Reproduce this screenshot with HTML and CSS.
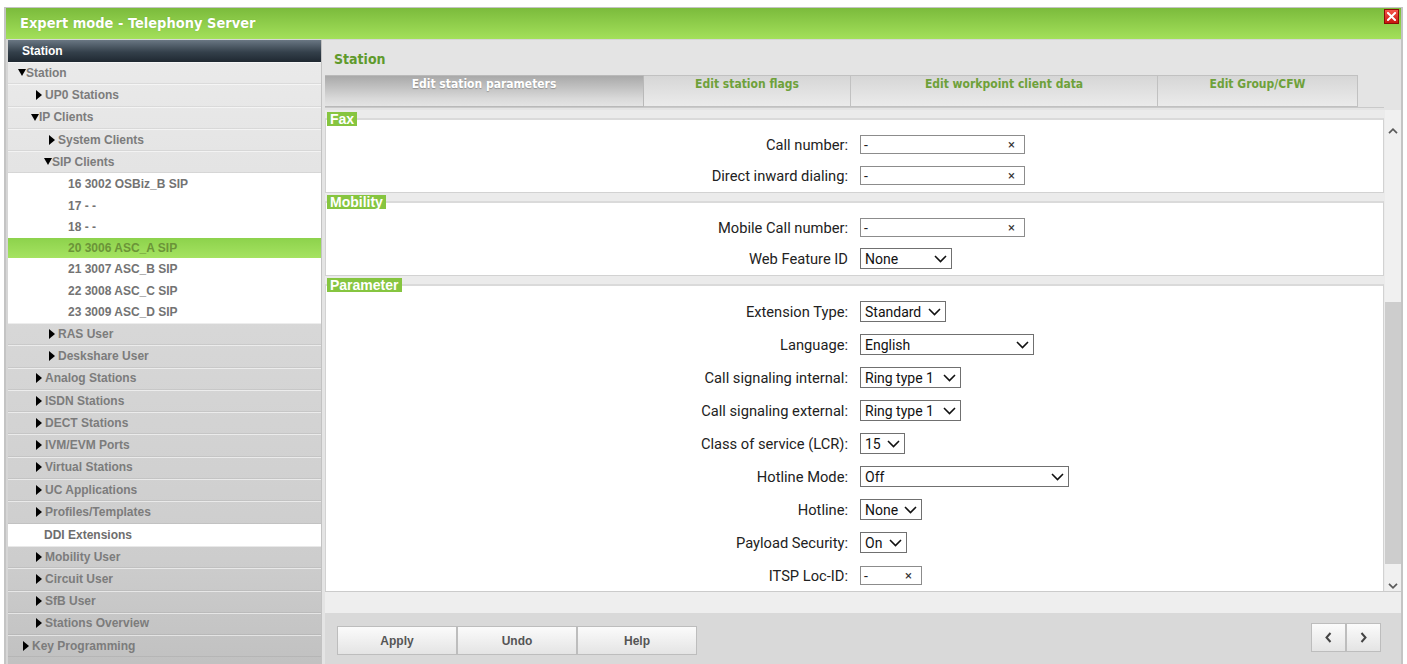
FILE: index.html
```html
<!DOCTYPE html>
<html lang="en">
<head>
<meta charset="utf-8">
<title>Expert mode - Telephony Server</title>
<link rel="stylesheet" href="styles.css">
</head>
<body>
<div class="window">
  <header class="titlebar">
    <span class="title">Expert mode - Telephony Server</span>
    <button class="close" aria-label="Close">
      <svg width="9" height="9" viewBox="0 0 9 9"><path d="M1 1L8 8M8 1L1 8" stroke="#fff" stroke-width="2" stroke-linecap="square"/></svg>
    </button>
  </header>
  <div class="body">
    <nav class="sidebar">
      <div class="side-head">Station</div>
      <ul class="tree">
        <li class="open l0"><span class="tog"></span>Station</li>
        <li class="closed l1"><span class="tog"></span>UP0 Stations</li>
        <li class="open l1"><span class="tog"></span>IP Clients</li>
        <li class="closed l2"><span class="tog"></span>System Clients</li>
        <li class="open l2"><span class="tog"></span>SIP Clients</li>
        <li class="leaf sub i3">16 3002 OSBiz_B SIP</li>
        <li class="leaf sub i3">17 - -</li>
        <li class="leaf sub i3">18 - -</li>
        <li class="leaf current i3">20 3006 ASC_A SIP</li>
        <li class="leaf sub i3">21 3007 ASC_B SIP</li>
        <li class="leaf sub i3">22 3008 ASC_C SIP</li>
        <li class="leaf sub i3">23 3009 ASC_D SIP</li>
        <li class="closed l2"><span class="tog"></span>RAS User</li>
        <li class="closed l2"><span class="tog"></span>Deskshare User</li>
        <li class="closed l1"><span class="tog"></span>Analog Stations</li>
        <li class="closed l1"><span class="tog"></span>ISDN Stations</li>
        <li class="closed l1"><span class="tog"></span>DECT Stations</li>
        <li class="closed l1"><span class="tog"></span>IVM/EVM Ports</li>
        <li class="closed l1"><span class="tog"></span>Virtual Stations</li>
        <li class="closed l1"><span class="tog"></span>UC Applications</li>
        <li class="closed l1"><span class="tog"></span>Profiles/Templates</li>
        <li class="leaf white i1">DDI Extensions</li>
        <li class="closed l1"><span class="tog"></span>Mobility User</li>
        <li class="closed l1"><span class="tog"></span>Circuit User</li>
        <li class="closed l1"><span class="tog"></span>SfB User</li>
        <li class="closed l1"><span class="tog"></span>Stations Overview</li>
        <li class="closed l0"><span class="tog"></span>Key Programming</li>
      </ul>
    </nav>

    <main class="main">
      <h1 class="page-title">Station</h1>

      <div class="tabbar">
        <div class="tab active">Edit station parameters</div>
        <div class="tab">Edit station flags</div>
        <div class="tab">Edit workpoint client data</div>
        <div class="tab">Edit Group/CFW</div>
      </div>

      <div class="scroller">
        <div class="pane">
          <fieldset class="group">
            <legend>Fax</legend>
            <div class="field">
              <label>Call number:</label>
              <div class="text w-165"><span>-</span><span class="clear">×</span></div>
            </div>
            <div class="field">
              <label>Direct inward dialing:</label>
              <div class="text w-165"><span>-</span><span class="clear">×</span></div>
            </div>
          </fieldset>

          <fieldset class="group">
            <legend>Mobility</legend>
            <div class="field">
              <label>Mobile Call number:</label>
              <div class="text w-165"><span>-</span><span class="clear">×</span></div>
            </div>
            <div class="field">
              <label>Web Feature ID</label>
              <div class="select w-92"><span>None</span><svg class="chev" width="13" height="8" viewBox="0 0 13 8"><path d="M1 1L6.5 6.5L12 1" fill="none" stroke="#111" stroke-width="1.6"/></svg></div>
            </div>
          </fieldset>

          <fieldset class="group tall">
            <legend>Parameter</legend>
            <div class="field">
              <label>Extension Type:</label>
              <div class="select w-86"><span>Standard</span><svg class="chev" width="13" height="8" viewBox="0 0 13 8"><path d="M1 1L6.5 6.5L12 1" fill="none" stroke="#111" stroke-width="1.6"/></svg></div>
            </div>
            <div class="field">
              <label>Language:</label>
              <div class="select w-174"><span>English</span><svg class="chev" width="13" height="8" viewBox="0 0 13 8"><path d="M1 1L6.5 6.5L12 1" fill="none" stroke="#111" stroke-width="1.6"/></svg></div>
            </div>
            <div class="field">
              <label>Call signaling internal:</label>
              <div class="select w-101"><span>Ring type 1</span><svg class="chev" width="13" height="8" viewBox="0 0 13 8"><path d="M1 1L6.5 6.5L12 1" fill="none" stroke="#111" stroke-width="1.6"/></svg></div>
            </div>
            <div class="field">
              <label>Call signaling external:</label>
              <div class="select w-101"><span>Ring type 1</span><svg class="chev" width="13" height="8" viewBox="0 0 13 8"><path d="M1 1L6.5 6.5L12 1" fill="none" stroke="#111" stroke-width="1.6"/></svg></div>
            </div>
            <div class="field">
              <label>Class of service (LCR):</label>
              <div class="select w-45"><span>15</span><svg class="chev" width="13" height="8" viewBox="0 0 13 8"><path d="M1 1L6.5 6.5L12 1" fill="none" stroke="#111" stroke-width="1.6"/></svg></div>
            </div>
            <div class="field">
              <label>Hotline Mode:</label>
              <div class="select w-209"><span>Off</span><svg class="chev" width="13" height="8" viewBox="0 0 13 8"><path d="M1 1L6.5 6.5L12 1" fill="none" stroke="#111" stroke-width="1.6"/></svg></div>
            </div>
            <div class="field">
              <label>Hotline:</label>
              <div class="select w-62"><span>None</span><svg class="chev" width="13" height="8" viewBox="0 0 13 8"><path d="M1 1L6.5 6.5L12 1" fill="none" stroke="#111" stroke-width="1.6"/></svg></div>
            </div>
            <div class="field">
              <label>Payload Security:</label>
              <div class="select w-47"><span>On</span><svg class="chev" width="13" height="8" viewBox="0 0 13 8"><path d="M1 1L6.5 6.5L12 1" fill="none" stroke="#111" stroke-width="1.6"/></svg></div>
            </div>
            <div class="field">
              <label>ITSP Loc-ID:</label>
              <div class="text w-62"><span>-</span><span class="clear">×</span></div>
            </div>
          </fieldset>
        </div>

        <div class="vscroll">
          <svg class="sb-up" width="10" height="6" viewBox="0 0 10 6"><path d="M1 5.2L5 1.2L9 5.2" fill="none" stroke="#5a5a5a" stroke-width="1.7"/></svg>
          <div class="sb-thumb"></div>
          <svg class="sb-down" width="10" height="6" viewBox="0 0 10 6"><path d="M1 0.8L5 4.8L9 0.8" fill="none" stroke="#5a5a5a" stroke-width="1.7"/></svg>
        </div>
      </div>

      <div class="strip"></div>

      <footer class="footer">
        <div class="actions">
          <button class="btn">Apply</button>
          <button class="btn">Undo</button>
          <button class="btn">Help</button>
        </div>
        <div class="pager">
          <button class="nav" aria-label="Previous"><svg width="7" height="11" viewBox="0 0 7 11"><path d="M5.5 1L1.5 5.5L5.5 10" fill="none" stroke="#444" stroke-width="2"/></svg></button>
          <button class="nav" aria-label="Next"><svg width="7" height="11" viewBox="0 0 7 11"><path d="M1.5 1L5.5 5.5L1.5 10" fill="none" stroke="#444" stroke-width="2"/></svg></button>
        </div>
      </footer>
    </main>
  </div>
</div>
</body>
</html>
```

FILE: styles.css
```css
* { box-sizing: border-box; }

html, body {
  margin: 0;
  height: 100%;
  overflow: hidden;
  background: #fff;
}

body {
  font-family: "Liberation Sans", Arial, sans-serif;
  color: #222;
}

/* ---------- window frame ---------- */
.window {
  margin: 7px 4px 0 4px;
  height: 680px;
  border: 2px solid #c4c4c4;
  border-top-width: 1px;
  border-bottom: 0;
  background: #d6d6d6;
  display: flex;
  flex-direction: column;
}

.titlebar {
  height: 31px;
  flex: none;
  display: flex;
  justify-content: space-between;
  align-items: flex-start;
  padding-left: 14px;
  background: linear-gradient(#7bbb3c, #a3e05a);
}

.title {
  font-family: "DejaVu Sans Condensed", "DejaVu Sans", sans-serif;
  font-stretch: condensed;
  font-weight: bold;
  font-size: 14.5px;
  line-height: 31px;
  color: #fff;
  text-shadow: 0 0 1px rgba(60, 110, 20, .35);
}

.close {
  width: 15px;
  height: 15px;
  margin: 1px 2px 0 0;
  padding: 0;
  border: 1px solid #8a0c05;
  background: linear-gradient(#f4554a, #c8170e);
  display: flex;
  align-items: center;
  justify-content: center;
}

.body {
  flex: 1;
  display: flex;
  padding-top: 1px;
  min-height: 0;
}

/* ---------- navigation tree ---------- */
.sidebar {
  width: 313px;
  flex: none;
  margin-left: 2px;
  background: linear-gradient(#ebebeb, #e4e4e4 130px, #d7d7d7 290px, #cdcdcd 520px, #bfbfbf 640px);
  font-weight: bold;
  font-size: 12px;
  color: #7c7c7c;
}

.side-head {
  height: 22px;
  line-height: 22px;
  padding-left: 14px;
  color: #fff;
  background: linear-gradient(#6a7783, #34404b 55%, #1f2831);
}

.tree {
  list-style: none;
  margin: 0;
  padding: 0;
}

.tree li {
  height: 22.3px;
  display: flex;
  align-items: center;
  white-space: nowrap;
  border-bottom: 1px solid rgba(0, 0, 0, .06);
  box-shadow: inset 0 1px 0 rgba(255, 255, 255, .55);
}

.l0 { padding-left: 10px; }
.l1 { padding-left: 23px; }
.l2 { padding-left: 36px; }

.i1 { padding-left: 36px; }
.i3 { padding-left: 60px; }

.tog {
  width: 0;
  height: 0;
  flex: none;
}

.open .tog {
  border-top: 7px solid #000;
  border-left: 4.5px solid transparent;
  border-right: 4.5px solid transparent;
}

.closed .tog {
  margin: 0 3px 0 5px;
  border-left: 6px solid #000;
  border-top: 5px solid transparent;
  border-bottom: 5px solid transparent;
}

.tree li.leaf {
  box-shadow: none;
  border-bottom: 0;
}

.tree li.sub {
  height: 21.5px;
  background: #fff;
  color: #737373;
}

.tree li.white {
  background: #fff;
  color: #6e6e6e;
}

.tree li.current {
  height: 20.5px;
  background: linear-gradient(#8dd24c, #a5e361);
  color: #6b9438;
}

/* ---------- main panel ---------- */
.main {
  flex: 1;
  min-width: 0;
  display: flex;
  flex-direction: column;
  border-left: 1px solid #c2c2c2;
  padding-left: 3px;
  background: #e4e4e4;
}

.page-title {
  margin: 0;
  height: 35px;
  flex: none;
  padding: 10px 0 0 9px;
  font-family: "DejaVu Sans Condensed", "DejaVu Sans", sans-serif;
  font-stretch: condensed;
  font-size: 14px;
  line-height: 18px;
  font-weight: bold;
  color: #5f9a2c;
}

.tabbar {
  flex: none;
  height: 33px;
  margin-right: 17px;
  display: grid;
  grid-template-columns: 319px 207px 307px 200px;
  border-bottom: 1px solid #c9c9c9;
}

.tab {
  padding-top: 1px;
  text-align: center;
  font-family: "DejaVu Sans Condensed", "DejaVu Sans", sans-serif;
  font-stretch: condensed;
  font-weight: bold;
  font-size: 12px;
  line-height: 15px;
  color: #6ea13a;
  background: linear-gradient(#d6d6d6, #ebebeb);
  border: 1px solid #c1c1c1;
  border-left-width: 0;
}

.tab.active {
  color: #fff;
  text-shadow: 0 1px 1px rgba(0, 0, 0, .25);
  background: linear-gradient(#a9a9a9, #d9d9d9 75%, #e4e4e4);
  border-color: #b9b9b9;
  border-left-width: 0;
}

/* ---------- scrolling form area ---------- */
.scroller {
  flex: none;
  height: 482px;
  margin-top: 2px;
  display: flex;
  border-bottom: 1px solid #cbcbcb;
}

.pane {
  flex: 1;
  overflow: hidden;
  background: #ebebeb;
}

.group {
  margin: 2px 1px 0 0;
  padding: 3px 0 1px;
  border: 1px solid #d2d2d2;
  border-top: 2px solid #dadada;
  background: #fff;
  min-width: 0;
}

.group legend {
  margin-left: 1px;
  padding: 0 3px;
  background: #86c540;
  color: #fff;
  font-weight: bold;
  font-size: 14px;
  line-height: 14px;
}

.field {
  height: 31px;
  display: grid;
  grid-template-columns: 522px auto;
  column-gap: 12px;
  align-items: center;
  justify-content: start;
  font-family: Roboto, "Liberation Sans", Arial, sans-serif;
}

.tall .field { height: 33px; }

.field label {
  text-align: right;
  font-size: 14.7px;
  color: #222;
}

.text {
  height: 19px;
  display: flex;
  align-items: center;
  justify-content: space-between;
  padding: 0 9px 0 3px;
  border: 1px solid #8c8c8c;
  background: #fff;
  font-size: 14px;
}

.clear {
  font-size: 13px;
  color: #333;
}

.select {
  height: 21px;
  display: flex;
  align-items: center;
  justify-content: space-between;
  padding: 0 4px 0 4px;
  border: 1px solid #707070;
  background: #fff;
  font-size: 14px;
  color: #111;
}

.chev { flex: none; }

.w-45 { width: 45px; }
.w-47 { width: 47px; }
.w-62 { width: 62px; }
.w-86 { width: 86px; }
.w-92 { width: 92px; }
.w-101 { width: 101px; }
.w-165 { width: 165px; }
.w-174 { width: 174px; }
.w-209 { width: 209px; }

.vscroll {
  width: 16px;
  flex: none;
  background: #f0f0f0;
  display: flex;
  flex-direction: column;
  align-items: center;
}

.sb-up { margin-top: 18px; flex: none; }

.sb-thumb {
  width: 100%;
  height: 262px;
  margin-top: 168px;
  background: #cdcdcd;
}

.sb-down { margin-top: 19px; flex: none; }

/* ---------- footer ---------- */
.strip {
  height: 21px;
  flex: none;
  background: #eeeeee;
}

.footer {
  flex: 1;
  display: flex;
  justify-content: space-between;
  align-items: flex-start;
  padding: 13px 20px 0 12px;
  background: #d9d9d9;
}

.actions { display: flex; }

.btn, .nav {
  height: 29px;
  padding: 0;
  border: 1px solid #bdbdbd;
  background: linear-gradient(#fbfbfb, #e4e4e4);
  font-family: "Liberation Sans", Arial, sans-serif;
  font-weight: bold;
  font-size: 12px;
  color: #555;
}

.btn { width: 120px; }

.pager {
  display: flex;
  margin-top: -3px;
}

.nav {
  width: 35px;
  display: flex;
  align-items: center;
  justify-content: center;
}
```
